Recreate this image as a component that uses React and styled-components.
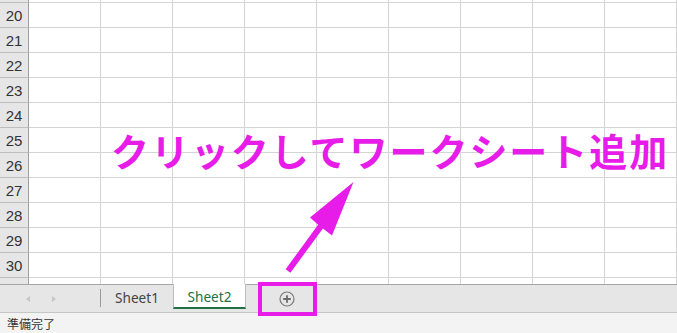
import React from "react";
import styled, { createGlobalStyle } from "styled-components";

const Global = createGlobalStyle`
  html, body { margin: 0; padding: 0; background: #fff; }
  body { font-family: "Liberation Sans", "Noto Sans CJK JP", sans-serif; }
  #root { width: 677px; height: 333px; overflow: hidden; }
`;

const Page = styled.div`
  position: relative;
  width: 677px;
  height: 333px;
  display: flex;
  flex-direction: column;
  overflow: hidden;
`;

const GridViewport = styled.div`
  height: 284px;
  overflow: hidden;
  flex: none;
`;

const GridScroll = styled.div`
  margin-top: -22px;
`;

const Row = styled.div`
  display: flex;
  height: 24px;
  border-bottom: 1px solid #d4d4d4;
`;

const RowHead = styled.div`
  flex: none;
  width: 28px;
  background: #e6e6e6;
  border-right: 1px solid #9f9f9f;
  border-bottom: 1px solid #bdbdbd;
  margin-bottom: -1px;
  display: flex;
  align-items: center;
  justify-content: center;
  font-family: "Liberation Sans", sans-serif;
  font-size: 15px;
  color: #333;
`;

const Cell = styled.div`
  flex: none;
  width: 71px;
  border-right: 1px solid #d4d4d4;
`;

const TabBar = styled.div`
  flex: none;
  height: 27px;
  border-top: 1px solid #a6a6a6;
  border-bottom: 1px solid #c6c6c6;
  background: #e6e6e6;
  display: flex;
  align-items: flex-start;
`;

const Nav = styled.div`
  width: 100px;
  height: 100%;
  display: flex;
  align-items: center;
  padding-left: 26px;
  gap: 22px;
  box-sizing: border-box;
`;

const NavArrow = styled.span`
  width: 0;
  height: 0;
  border-top: 3.5px solid transparent;
  border-bottom: 3.5px solid transparent;
  ${(p) =>
    p.$dir === "left"
      ? "border-right: 4px solid #c6c6c6;"
      : "border-left: 4px solid #c6c6c6;"}
`;

const Separator = styled.div`
  width: 1px;
  height: 18px;
  margin-top: 4px;
  background: #9a9a9a;
`;

const Tab = styled.div`
  box-sizing: border-box;
  width: ${(p) => (p.$active ? "73px" : "72px")};
  height: ${(p) => (p.$active ? "25px" : "24px")};
  margin-top: ${(p) => (p.$active ? "-1px" : "0")};
  display: flex;
  align-items: center;
  justify-content: center;
  font-family: "Noto Sans", "Liberation Sans", sans-serif;
  font-size: 13.6px;
  color: ${(p) => (p.$active ? "#217346" : "#444")};
  background: ${(p) => (p.$active ? "#fff" : "transparent")};
  border-left: ${(p) => (p.$active ? "1px solid #bcbcbc" : "none")};
  border-right: ${(p) => (p.$active ? "1px solid #bcbcbc" : "none")};
  border-bottom: ${(p) => (p.$active ? "2px solid #217346" : "none")};
  padding-top: ${(p) => (p.$active ? "2px" : "1px")};
`;

const AddButton = styled.div`
  width: 82px;
  height: 100%;
  display: flex;
  align-items: center;
  justify-content: center;
`;

const StatusBar = styled.div`
  flex: 1;
  background: #f3f3f3;
  display: flex;
  align-items: center;
  padding-left: 7px;
  font-family: "Noto Sans CJK JP", sans-serif;
  font-size: 12px;
  color: #333;
`;

const Callout = styled.div`
  position: absolute;
  left: 111px;
  top: 130px;
  font-family: "Noto Sans CJK JP", sans-serif;
  font-weight: 700;
  font-size: 38px;
  line-height: 40px;
  letter-spacing: 1.95px;
  color: #e81ce8;
  white-space: nowrap;
`;

const HighlightBox = styled.div`
  position: absolute;
  left: 258px;
  top: 282px;
  width: 59px;
  height: 34px;
  box-sizing: border-box;
  border: 4px solid #e81ce8;
`;

const ArrowSvg = styled.svg`
  position: absolute;
  left: 0;
  top: 0;
  pointer-events: none;
`;

const rows = [19, 20, 21, 22, 23, 24, 25, 26, 27, 28, 29, 30, 31];
const cols = Array.from({ length: 9 });

export default function App() {
  return (
    <Page>
      <Global />
      <GridViewport>
        <GridScroll>
          {rows.map((r) => (
            <Row key={r}>
              <RowHead>{r >= 20 && r <= 30 ? r : ""}</RowHead>
              {cols.map((_, i) => (
                <Cell key={i} />
              ))}
            </Row>
          ))}
        </GridScroll>
      </GridViewport>
      <TabBar>
        <Nav>
          <NavArrow $dir="left" />
          <NavArrow $dir="right" />
        </Nav>
        <Separator />
        <Tab>Sheet1</Tab>
        <Tab $active>Sheet2</Tab>
        <AddButton>
          <svg width="16" height="16" viewBox="0 0 16 16">
            <circle cx="8" cy="8" r="7" fill="none" stroke="#7a7a7a" strokeWidth="1.2" />
            <path d="M8 4.2v7.6M4.2 8h7.6" stroke="#6a6a6a" strokeWidth="1.8" />
          </svg>
        </AddButton>
      </TabBar>
      <StatusBar>準備完了</StatusBar>

      <Callout>クリックしてワークシート追加</Callout>
      <ArrowSvg width="677" height="333" viewBox="0 0 677 333">
        <polygon
          points="285.6,269.2 318.1,224.8 310,217.5 353.5,182 332,235.5 322.9,228.4 290.4,272.8"
          fill="#e81ce8"
        />
      </ArrowSvg>
      <HighlightBox />
    </Page>
  );
}
